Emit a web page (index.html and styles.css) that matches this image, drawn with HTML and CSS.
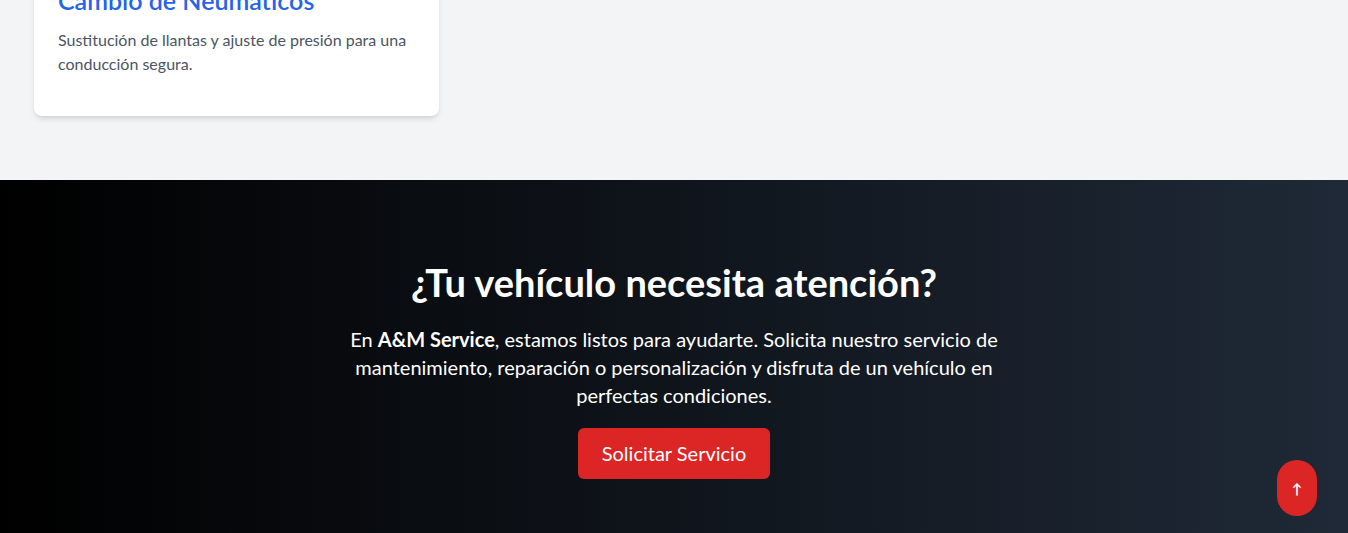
FILE: index.html
```html
<!DOCTYPE html>
<html lang="es">
<head>
<meta charset="utf-8">
<title>A&amp;M Service</title>
<link rel="stylesheet" href="styles.css">
</head>
<body>
<section class="services">
  <div class="grid">
    <div class="card">
      <h3 class="card-title">Cambio de Neumáticos</h3>
      <p class="card-text">Sustitución de llantas y ajuste de presión para una conducción segura.</p>
    </div>
  </div>
</section>
<section class="cta">
  <h2 class="cta-title">¿Tu vehículo necesita atención?</h2>
  <p class="cta-text">En <strong>A&amp;M Service</strong>, estamos listos para ayudarte. Solicita nuestro servicio de mantenimiento, reparación o personalización y disfruta de un vehículo en perfectas condiciones.</p>
  <a class="cta-btn" href="#">Solicitar Servicio</a>
</section>
<a class="to-top" href="#">↑</a>
</body>
</html>
```
FILE: styles.css
```css
* { box-sizing: border-box; }
html, body { margin: 0; padding: 0; }
body {
  font-family: Lato, "Open Sans", sans-serif;
  background: #f3f4f6;
  color: #1f2937;
  overflow: hidden;
}
.services {
  padding: 0 0 64px;
  margin-top: -40px;
}
.grid {
  max-width: 1280px;
  margin: 0 auto;
  display: grid;
  grid-template-columns: repeat(3, 1fr);
  gap: 32px;
}
.card {
  background: #fff;
  border-radius: 8px;
  box-shadow: 0 4px 6px -1px rgba(0,0,0,0.1), 0 2px 4px -2px rgba(0,0,0,0.1);
  padding: 24px;
}
.card-title {
  margin: 0 0 12px;
  font-size: 25px;
  line-height: 32px;
  font-weight: 600;
  color: #2563eb;
}
.card-text {
  margin: 0 0 16px;
  font-size: 16px;
  line-height: 24px;
  color: #4b5563;
}
.cta {
  background: linear-gradient(to right, #000000, #1f2937);
  color: #fff;
  text-align: center;
  padding: 82px 16px 54px;
  display: flex;
  flex-direction: column;
  align-items: center;
}
.cta-title {
  margin: 0 0 23px;
  font-size: 38px;
  line-height: 40px;
  font-weight: 700;
}
.cta-text {
  margin: 0 0 19px;
  max-width: 672px;
  font-size: 20px;
  line-height: 28px;
}
.cta-text strong { font-weight: 700; }
.cta-btn {
  display: inline-block;
  background: #dc2626;
  color: #fff;
  text-decoration: none;
  font-size: 20px;
  line-height: 27px;
  padding: 12px 24px;
  border-radius: 6px;
}
.to-top {
  position: fixed;
  right: 31px;
  bottom: 17px;
  width: 40px;
  height: 56px;
  border-radius: 9999px;
  background: #dc2626;
  color: #fff;
  text-decoration: none;
  display: flex;
  align-items: center;
  justify-content: center;
  font-size: 14px;
  font-weight: 700;
}
```
